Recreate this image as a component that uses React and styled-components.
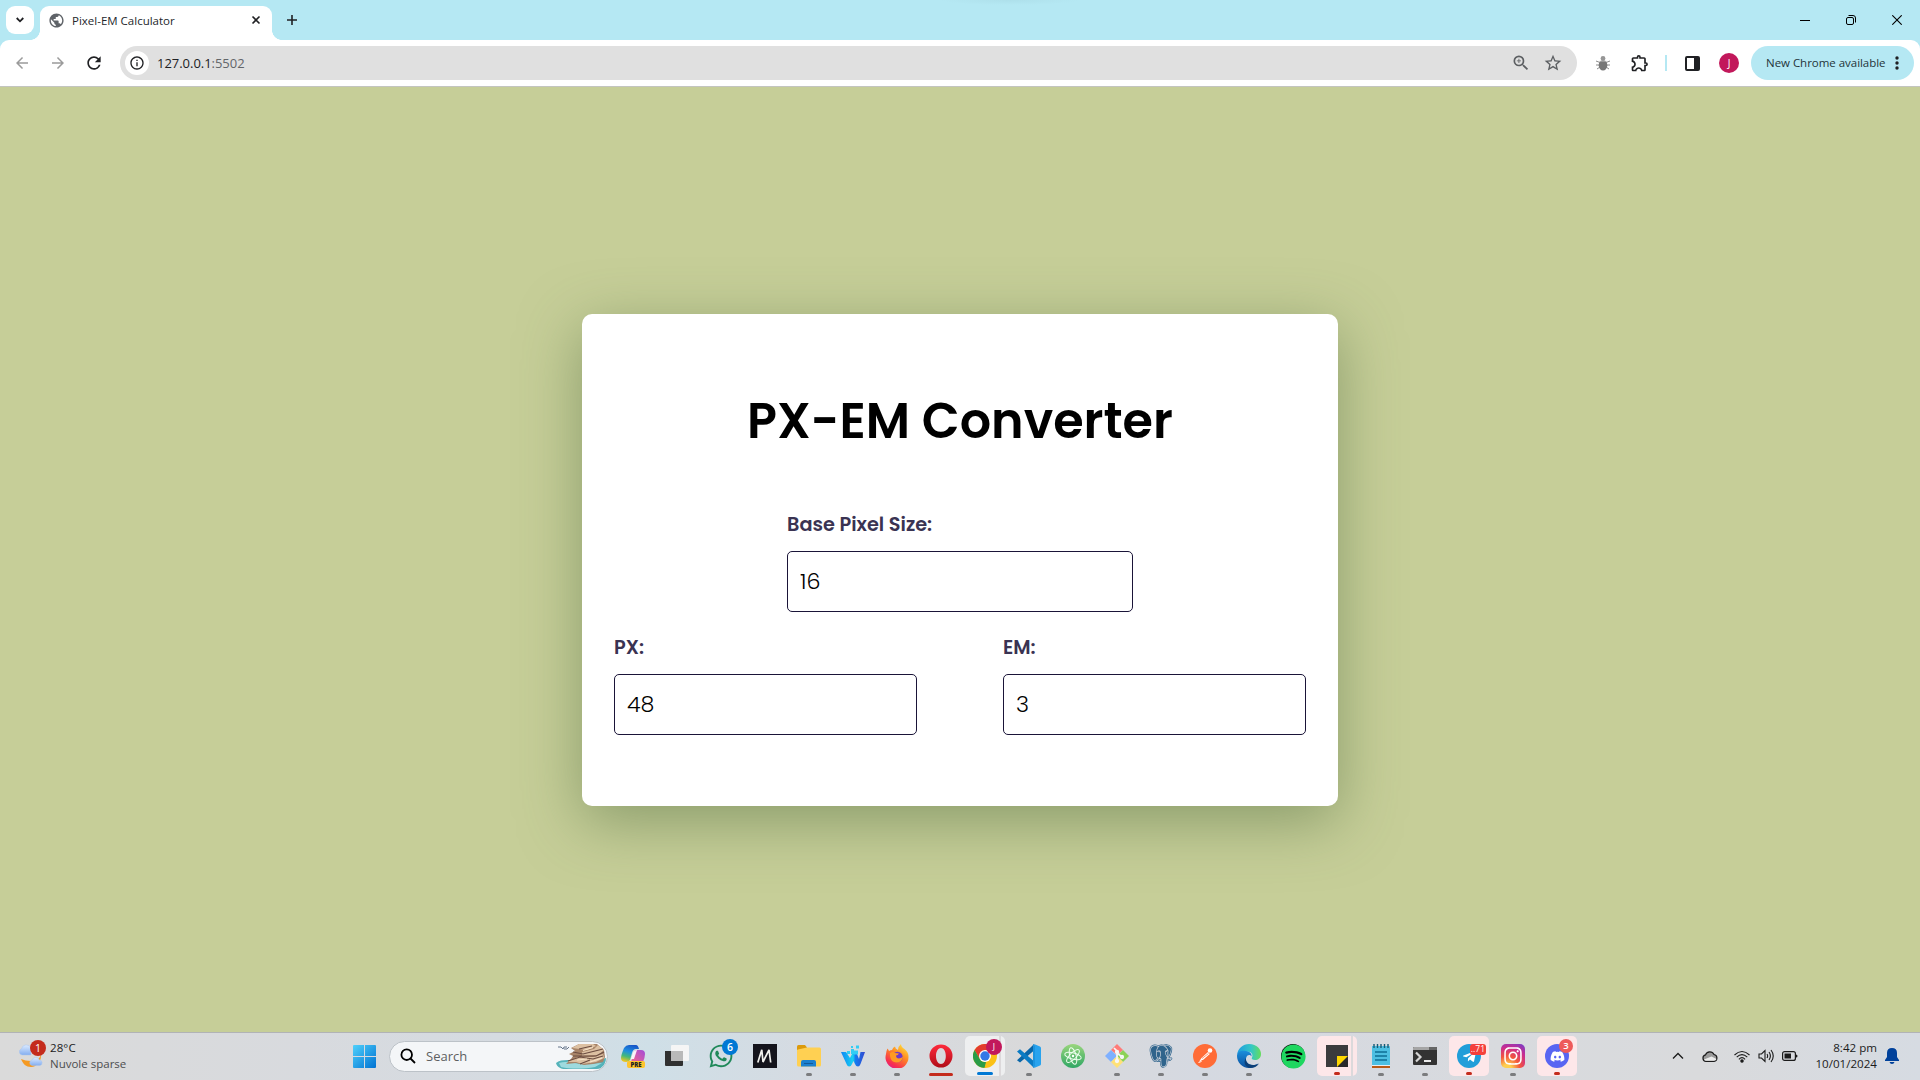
import React from "react";
import styled, { createGlobalStyle, css } from "styled-components";
import { FaWhatsapp, FaSpotify, FaTelegramPlane, FaDiscord, FaInstagram } from "react-icons/fa";
import { BiLogoPostgresql } from "react-icons/bi";
import {
  MdArrowBack, MdArrowForward, MdRefresh, MdInfoOutline, MdZoomIn, MdStarBorder, MdPublic, MdOutlineExtension,
} from "react-icons/md";

const UI = '"Open Sans", "Noto Sans", sans-serif';
const BRAND = 'Poppins, Inter, "Open Sans", sans-serif';

const Global = createGlobalStyle`
  * { box-sizing: border-box; }
  body { margin: 0; font-family: ${UI}; overflow: hidden; }
  svg { display: block; flex: none; }
`;

const Screen = styled.div`
  width: 1920px;
  height: 1080px;
  display: flex;
  flex-direction: column;
  background: #b5e8f3;
`;

/* ---------- browser chrome ---------- */

const TitleBar = styled.header`
  height: 40px;
  display: flex;
  align-items: flex-end;
  padding-left: 6px;
  background: radial-gradient(ellipse 70px 5px at 1010px 0, #aee0eb, #b5e8f3);
`;

const TabSearch = styled.button`
  width: 28px;
  height: 28px;
  margin: 0 6px 6px 0;
  padding: 0;
  border: 0;
  border-radius: 9px;
  background: #fff;
  color: #202124;
  display: grid;
  place-items: center;
`;

const Tab = styled.div`
  width: 232px;
  height: 34px;
  padding: 0 10px 6px 8px;
  display: flex;
  align-items: center;
  border-radius: 9px 9px 0 0;
  background: #fff;
  color: #202124;
  position: relative;
  &::before, &::after {
    content: "";
    position: absolute;
    bottom: 0;
    width: 10px;
    height: 10px;
  }
  &::before { left: -10px; background: radial-gradient(circle at 0 0, transparent 9.6px, #fff 10.2px); }
  &::after { right: -10px; background: radial-gradient(circle at 100% 0, transparent 9.6px, #fff 10.2px); }
`;

const TabTitle = styled.span`
  flex: 1;
  margin-left: 7px;
  padding-top: 1px;
  font-size: 11.5px;
  letter-spacing: 0;
  line-height: 16px;
  color: #24272b;
`;

const NewTab = styled.div`
  margin: 0 0 14px 14px;
  color: #202124;
`;

const WindowButtons = styled.div`
  margin-left: auto;
  height: 40px;
  display: flex;
`;

const WindowButton = styled.div`
  width: 46px;
  display: grid;
  place-items: center;
`;

const Toolbar = styled.nav`
  height: 46px;
  display: flex;
  align-items: center;
  padding: 0 6px 0 12px;
  border-radius: 9px 9px 0 0;
  background: #fff;
  color: #202124;
`;

const NavButton = styled.div`
  width: 20px;
  height: 20px;
  margin-right: 16px;
  display: grid;
  place-items: center;
  color: ${(p) => (p.$off ? "#9b9b9b" : "#202124")};
`;

const Address = styled.div`
  width: 1457px;
  height: 34px;
  padding: 0 14px 0 5px;
  display: flex;
  align-items: center;
  border-radius: 17px;
  background: #e0e0e0;
  color: #5c5f62;
`;

const SiteInfo = styled.div`
  width: 24px;
  height: 24px;
  border-radius: 50%;
  background: #fff;
  color: #202124;
  display: grid;
  place-items: center;
`;

const Url = styled.span`
  flex: 1;
  margin-left: 8px;
  font-size: 13px;
  letter-spacing: -0.03px;
  color: #202124;
  span { color: #63666a; }
`;

const Tools = styled.div`
  flex: 1;
  display: flex;
  align-items: center;
`;

const Divider = styled.i`
  width: 2px;
  height: 16px;
  margin: 0 18px 0 15px;
  background: #b5e8f3;
`;

const Avatar = styled.span`
  display: grid;
  place-items: center;
  width: ${(p) => p.$size}px;
  height: ${(p) => p.$size}px;
  border-radius: 50%;
  background: #c2185b;
  color: #fff;
  font-size: ${(p) => p.$size * 0.5}px;
  line-height: 1;
`;

const UpdatePill = styled.div`
  width: 163px;
  height: 34px;
  margin-left: auto;
  padding: 0 15px 0 15px;
  display: flex;
  align-items: center;
  justify-content: space-between;
  border-radius: 17px;
  background: #b5e8f3;
  color: #24343a;
  font-size: 11.5px;
  letter-spacing: -0.03px;
  white-space: nowrap;
  span { padding-bottom: 1px; }
`;

/* ---------- page ---------- */

const Page = styled.main`
  height: 946px;
  border-top: 1px solid #c3c5c0;
  display: flex;
  align-items: center;
  justify-content: center;
  background: #c6ce98;
  font-family: ${BRAND};
`;

const Card = styled.section`
  width: 756px;
  height: 492px;
  padding: 72.5px 32px 0;
  border-radius: 10px;
  background: #fff;
  box-shadow: 0 15px 60px rgba(78, 106, 62, 0.5);
`;

const Heading = styled.h1`
  margin: 0 0 55px;
  font-size: 49.28px;
  line-height: 70px;
  font-weight: 600;
  text-align: center;
  white-space: nowrap;
  color: #000;
`;

const Row = styled.div`
  display: flex;
  justify-content: ${(p) => (p.$center ? "center" : "space-between")};
  margin-bottom: 22px;
`;

const Field = styled.label`
  width: ${(p) => p.$width}px;
  display: flex;
  flex-direction: column;
  gap: 12px;
  font-size: 19.3px;
  line-height: 28px;
  font-weight: 600;
  color: #3a3352;
`;

const Input = styled.input`
  width: 100%;
  height: 61px;
  padding: 0 12px;
  border: 1px solid #1a1438;
  border-radius: 5px;
  outline: 0;
  background: #fff;
  color: #000;
  font: 300 22.2px ${BRAND};
`;

/* ---------- taskbar ---------- */

const Taskbar = styled.footer`
  height: 48px;
  padding-bottom: 1px;
  border-top: 1px solid #b1b3b6;
  display: flex;
  align-items: center;
  background: linear-gradient(90deg, #dadada 0, #d8dade 300px, #d5dbe1 500px, #cfdfe7 650px, #d5dbe2 800px, #d9d9da 1030px,
    #d5d9e1 1200px, #d8dade 1500px, #d9dadc 1700px, #d6dbe2 1920px);
`;

const Weather = styled.div`
  width: 342px;
  padding-left: 19px;
  display: flex;
  align-items: center;
  gap: 7px;
  font-size: 11.5px;
  line-height: 16px;
  color: #1b1b1b;
  p { margin: 0; letter-spacing: 0.1px; }
  p + p { color: #4c4d4f; letter-spacing: 0; }
`;

const Lines = styled.div`
  padding-bottom: 1px;
`;

const Holder = styled.span`
  position: relative;
  display: block;
`;

const Badge = styled.b`
  position: absolute;
  top: ${(p) => p.$top}px;
  right: ${(p) => p.$right}px;
  min-width: ${(p) => p.$size || 16}px;
  height: ${(p) => p.$height || p.$size || 16}px;
  padding: 0 1px;
  display: grid;
  place-items: center;
  border-radius: ${(p) => p.$radius ?? 8}px;
  background: ${(p) => p.$bg};
  color: ${(p) => p.$color || "#fff"};
  font-size: ${(p) => p.$font || 10.5}px;
  font-weight: ${(p) => p.$weight || 400};
  line-height: 1;
`;

const Search = styled.div`
  width: 219px;
  height: 31px;
  margin: 0 3px;
  padding: 0 1px 0 10px;
  display: flex;
  align-items: center;
  border: 1px solid #bcc2c8;
  border-radius: 16px;
  background: #f4f6f8;
  overflow: hidden;
  span {
    flex: 1;
    margin-left: 10px;
    padding-bottom: 1px;
    font-size: 13px;
    letter-spacing: 0;
    color: #5d5f61;
  }
`;

const Slot = styled.div`
  width: 44px;
  height: 47px;
  flex: none;
  display: flex;
  align-items: center;
  justify-content: center;
  position: relative;
  ${(p) => p.$tile && css`
    height: 40px;
    width: 40px;
    margin: 0 2px;
    border-radius: 5px;
    background: ${p.$stack
      ? `linear-gradient(90deg, ${p.$tile} 34px, #dcd9db 34px 36px, ${p.$tile} 36px)`
      : p.$tile};
  `}
  &::after {
    content: "";
    display: ${(p) => (p.$mark ? "block" : "none")};
    position: absolute;
    bottom: ${(p) => (p.$tile ? 1 : 4)}px;
    width: ${(p) => p.$markWidth || 6}px;
    height: 3px;
    border-radius: 2px;
    background: ${(p) => p.$mark};
  }
`;

const Disc = styled.span`
  width: 24px;
  height: 24px;
  display: grid;
  place-items: center;
  border-radius: ${(p) => p.$radius || "50%"};
  background: ${(p) => p.$bg};
  color: #fff;
`;

const Tray = styled.div`
  margin-left: auto;
  padding-right: 21px;
  display: flex;
  align-items: center;
  color: #1b1b1b;
`;

const Clock = styled.div`
  width: 72px;
  margin: 0 8px 0 7px;
  padding-bottom: 1px;
  text-align: right;
  font-size: 11.6px;
  line-height: 16px;
  white-space: nowrap;
  p { margin: 0; }
`;

const Gap = styled.i`
  width: ${(p) => p.$w}px;
`;

/* ---------- drawings ---------- */

const Line = ({ w = 24, h = w, box = `0 0 ${w} ${h}`, sw = 1.6, children }) => (
  <svg width={w} height={h} viewBox={box} fill="none" stroke="currentColor" strokeWidth={sw}>{children}</svg>
);

const WeatherIcon = () => (
  <svg width="24" height="24" viewBox="0 0 24 24">
    <defs>
      <linearGradient id="cl" x1="0" y1="0" x2="0" y2="1"><stop stopColor="#dcebff" /><stop offset="1" stopColor="#84aef0" /></linearGradient>
    </defs>
    <path d="M22 9c0 5-4 8-10 8-4 0-7-1-10-2 2 5 5 8 10 8 6 0 11-6 10-14z" fill="#f59a23" />
    <path d="M3 11a3.200 3.200 0 0 1-.5-6.200A5 5 0 0 1 12 4v7z" fill="url(#cl)" stroke="#a9c5ee" strokeWidth=".5" />
    <path d="M13 21.500a2.800 2.800 0 0 1 0-5.500 4 4 0 0 1 7.500 0 2.800 2.800 0 0 1 .5 5.500z" fill="url(#cl)" stroke="#a9c5ee" strokeWidth=".5" />
  </svg>
);

const StartIcon = () => (
  <svg width="23" height="23" viewBox="0 0 23 23">
    <defs><linearGradient id="win" x1="0" y1="0" x2="1" y2="1"><stop stopColor="#4fd0fb" /><stop offset="1" stopColor="#0072d2" /></linearGradient></defs>
    <path d="M1 0h10v11H0V1q0-1 1-1zM12 0h10q1 0 1 1v10H12zM0 12h11v11H1q-1 0-1-1zM12 12h11v10q0 1-1 1H12z" fill="url(#win)" />
  </svg>
);

const RocksIcon = () => (
  <svg width="50" height="27" viewBox="0 0 50 27">
    <path d="M0 20c5-4 14-3 26-2s18-2 24-3c0 6-4 11-9 11H9c-4 0-8-2-9-6z" fill="#55b3ba" />
    <path d="M3 20c9-3 17 2 29 1l14-1-7 4c-11 2-25 2-34 0z" fill="#9edade" />
    <path d="M15 5l8-4h18l7 6 1 7-2 5-10 2-9 1-8-2-10 1 5-5 2-3-4-2 6-3z" fill="#a88468" />
    <path d="M16 5l7-4h14l3 2-9 4zM26 9l12-3 4-4 6 5-6 5-16 1zM11 19l11-5 15 0 10-3 1 4-8 4-14 2-6-2z" fill="#dcc0a2" />
    <path d="M23 6l13-3M17 9l10 2 12-3 8-2M17 13l12 0 11 0 8-4M12 18l12-4 13 2 10-3M24 21l10-4" stroke="#6b4c41" strokeWidth="1.200" fill="none" />
    <path d="M27 7.500l10-3M21 17l10-1M34 19l12-4" stroke="#f7e3c9" strokeWidth="1.200" fill="none" />
    <path d="M2 4l3 0 2 2 1-2 3 0M8 6l2 0 1 0 2-2" stroke="#64748a" strokeWidth="1" fill="none" />
  </svg>
);

const CopilotIcon = () => (
  <svg width="24" height="24" viewBox="0 0 24 24">
    <defs>
      <linearGradient id="cpa" x1=".6" y1="0" x2=".3" y2="1"><stop stopColor="#1756c8" /><stop offset=".4" stopColor="#1f8fe0" /><stop offset=".7" stopColor="#44b97a" /><stop offset="1" stopColor="#f2c61d" /></linearGradient>
      <linearGradient id="cpb" x1="1" y1="0" x2="0" y2="1"><stop stopColor="#a24bd9" /><stop offset=".6" stopColor="#e2609d" /><stop offset="1" stopColor="#f59a55" /></linearGradient>
    </defs>
    <path d="M8 1h7q2 0 3 4h-3q-3 0-4 4l-2 7q-1 2-4 2-5 0-5-4 0-3 3-10Q5 1 8 1z" fill="url(#cpa)" />
    <path d="M15 6h5q4 0 4 4 0 3-2 8-1 4-5 4H9q-3 0-3-3 4 0 5-4l2-7q1-2 2-2z" fill="url(#cpb)" />
    <path d="M12 9q1-3 4-3l-3 9h-3z" fill="#fff" opacity=".9" />
  </svg>
);

const TaskViewIcon = () => (
  <svg width="24" height="24" viewBox="0 0 24 24">
    <path d="M0 7h18v14q0 1-1 1H1q-1 0-1-1z" fill="#303030" />
    <path d="M7 1h16q1 0 1 1v14q0 1-1 1H6V2q0-1 1-1z" fill="#f5f5f5" />
    <path d="M6 7h12v10H6z" fill="#b9b9b9" />
  </svg>
);

const MIcon = () => (
  <svg width="24" height="24" viewBox="0 0 24 24">
    <path d="M0 0h24v24H0z" fill="#14141c" />
    <path d="M4.800 18.500L8.800 5.800 10 18l6-12.200 1.700 12.700" fill="none" stroke="#f2f2ee" strokeWidth="1.700" strokeLinejoin="bevel" />
  </svg>
);

const FolderIcon = () => (
  <svg width="24" height="24" viewBox="0 0 24 24">
    <path d="M0 2.500Q0 1 1.500 1H8l2 2.500V8H0z" fill="#dc9a0b" />
    <path d="M1 5.500L10 3.500h12.500Q24 3.500 24 5v16q0 1.500-1.500 1.500h-21Q0 22.500 0 21V6z" fill="#ffd052" />
    <path d="M4 22.500V18q0-2 2-2h11q2 0 2 2v4.500z" fill="#1b80cf" /><path d="M7 19h9v1H7z" fill="#125a99" />
  </svg>
);

const WIcon = () => (
  <svg width="24" height="24" viewBox="0 0 24 24">
    <defs><linearGradient id="wg"><stop stopColor="#0f86f5" /><stop offset=".5" stopColor="#19d2f2" /><stop offset=".6" stopColor="#147bf0" /><stop offset="1" stopColor="#3348cf" /></linearGradient></defs>
    <path d="M0 8h5l4 6 2-4h5l2 5 1.500-7H24l-4.500 12q-1 2.500-2.500 2.500-2 0-3-2.500L12.500 17 11 20q-1 2.500-2.800 2.500-1.700 0-2.700-2.500z" fill="url(#wg)" />
    <path d="M6 7h3v3H6zM10 5h3v5h-3zM13 6.500h4v4h-4zM10 2h2v2h-2zM15 1.500h3v3h-3z" fill="#32cdf4" />
  </svg>
);

const FirefoxIcon = () => (
  <svg width="24" height="24" viewBox="0 0 24 24">
    <defs><linearGradient id="ff" x1=".8" y1="0" x2=".2" y2="1"><stop stopColor="#ffe33d" /><stop offset=".4" stopColor="#ff8a22" /><stop offset=".8" stopColor="#f7304f" /><stop offset="1" stopColor="#e01d8c" /></linearGradient></defs>
    <path d="M2.500 4.500q1 1 1.500 2.500 1.500-1 3-1Q8 3 10 2.500q0 2 3 3.500 0-3.500 3-6 0 3 3.500 5 4 3 4 8A11.500 11.500 0 1 1 1 10q.2-3 1.500-5.500z" fill="url(#ff)" />
    <circle cx="12.500" cy="13" r="5.200" fill="#7038c8" />
    <path d="M5 9q3-2 5 0l4 .5q-1 2-3 2 0 3 3 3 2 0 4-2-1 6-6.500 6Q6 18.500 5 12z" fill="#ff9a22" />
  </svg>
);

const OperaIcon = () => (
  <svg width="24" height="24" viewBox="0 0 24 24">
    <defs><linearGradient id="op" x1="0" y1="0" x2="0" y2="1"><stop stopColor="#ff2a3c" /><stop offset="1" stopColor="#b00d18" /></linearGradient></defs>
    <path fillRule="evenodd" d="M12 .5a11.500 11.500 0 1 0 0 23 11.500 11.500 0 0 0 0-23zm0 3.500c2.800 0 4.800 3.500 4.800 8s-2 8-4.800 8-5-3.500-5-8 2.200-8 5-8z" fill="url(#op)" />
  </svg>
);

const ChromeIcon = () => (
  <svg width="24" height="24" viewBox="0 0 24 24">
    <circle cx="12" cy="12" r="12" fill="#fbc116" />
    <path d="M1.600 6A12 12 0 0 1 22.400 6H12l-5.200 9z" fill="#e33b2e" />
    <path d="M1.600 6l5.200 9A6 6 0 0 0 12 18l.9.100L12 24A12 12 0 0 1 1.600 6z" fill="#2a9c47" />
    <path d="M17.200 15L12 24l-.7 0 3-8z" fill="#fbc116" />
    <circle cx="12" cy="12" r="6" fill="#fff" /><circle cx="12" cy="12" r="4.700" fill="#3478e6" />
  </svg>
);

const CodeIcon = () => (
  <svg width="24" height="24" viewBox="0 0 24 24">
    <path d="M17 0v6.500L3 18.500 0 16.300 13.500 3.500z" fill="#0a66a8" />
    <path d="M0 7.500L3 5.200l14 12V24l-4-4z" fill="#0a7bc4" />
    <path d="M17 0l6 2.500q1 .5 1 1.500v16q0 1-1 1.500L17 24q1-1 1-2V2q0-1-1-2z" fill="#29a3ee" />
    <path d="M17 0q1 1 1 2v20q0 1-1 2l-1-1V1z" fill="#1c94df" />
  </svg>
);

const AtomIcon = () => (
  <svg width="24" height="24" viewBox="0 0 24 24">
    <defs><linearGradient id="at" x1="0" y1="0" x2="0" y2="1"><stop stopColor="#9ad67d" /><stop offset="1" stopColor="#2fa764" /></linearGradient></defs>
    <circle cx="12" cy="12" r="12" fill="url(#at)" />
    <g fill="none" stroke="#effff0" strokeWidth="1">
      <ellipse cx="12" cy="12" rx="8.500" ry="3.200" transform="rotate(15 12 12)" />
      <ellipse cx="12" cy="12" rx="8.500" ry="3.200" transform="rotate(75 12 12)" />
      <ellipse cx="12" cy="12" rx="8.500" ry="3.200" transform="rotate(135 12 12)" />
    </g>
    <circle cx="12" cy="12" r="1.200" fill="#fff" />
  </svg>
);

const GitIcon = () => (
  <svg width="24" height="24" viewBox="0 0 24 24">
    <path d="M12 0l6 6-6 5-6-5z" fill="#ff7b78" /><path d="M6 6l6 6-6 6-6-6z" fill="#7fb0ff" />
    <path d="M18 6l6 6-6 6-6-6z" fill="#8cd257" /><path d="M12 12l6 6-6 6-6-6z" fill="#ffe177" />
    <g stroke="#f7f7f7" strokeWidth="1.700" fill="#f7f7f7"><path d="M9 4l3 3v10M12 9l5 4" fill="none" /><circle cx="12" cy="8" r="1.300" /><circle cx="17" cy="13" r="1.300" /><circle cx="12" cy="17" r="1.300" /></g>
  </svg>
);

const ElephantIcon = styled(BiLogoPostgresql)`
  color: #2f648c;
`;

const PostmanIcon = () => (
  <svg width="24" height="24" viewBox="0 0 24 24">
    <circle cx="12" cy="12" r="12" fill="#ff6c37" />
    <circle cx="17" cy="6.500" r="2.300" fill="#fff" />
    <path d="M15 8l1.800 2-6.300 5.500-4.500 2.300L8.500 14z" fill="#fff" /><path d="M9 14.500L15.500 9.500" stroke="#ff6c37" strokeWidth=".7" />
    <path d="M5.500 18.500l3-1" stroke="#fff" />
  </svg>
);

const EdgeIcon = () => (
  <svg width="24" height="24" viewBox="0 0 24 24">
    <defs>
      <linearGradient id="ea"><stop stopColor="#1c9be0" /><stop offset=".6" stopColor="#35c7c5" /><stop offset="1" stopColor="#65dd5a" /></linearGradient>
      <linearGradient id="eb" x1="0" y1="0" x2="0" y2="1"><stop stopColor="#1b8fdc" /><stop offset="1" stopColor="#0b4f9e" /></linearGradient>
    </defs>
    <path d="M0 11C1 4 6 0 12 0c8 0 12 5.500 12 10 0 4-3 6-6 6-2.500 0-4-1-3-2.500 1.500-3-.5-6-5-6C5 7.500 1 8 0 11z" fill="url(#ea)" />
    <path d="M0 12c0-5 5-6 9-5 4 .5 6 3 5.500 5.500-1-2.500-5-2-5.500 2-.5 5 6 9 12 5-2 3-5.500 4.500-9 4.500C5 24 0 18 0 12z" fill="url(#eb)" />
    <path d="M9 14c-1 6 6 9 13 5.500-2 3-5 4.500-9 4.500-5-1-7-6-4-10z" fill="#0c3f78" />
  </svg>
);

const StickyIcon = () => (
  <svg width="22" height="22" viewBox="0 0 22 22"><path d="M0 0h22v11L11 22H0z" fill="#3b3b3d" /><path d="M11 11h11v11H11z" fill="#29292b" /><path d="M11 11h11L11 22z" fill="#ffd600" /></svg>
);

const NotepadIcon = () => (
  <svg width="20" height="24" viewBox="0 0 20 24">
    <path d="M1 2h17q1 0 1 1v18H1z" fill="#4dbfe2" /><path d="M1 21h18v1H1z" fill="#e9edf0" /><path d="M1 22h18v2H1z" fill="#b85a17" />
    <path d="M3 0v4M6.500 0v4M10 0v4M13.500 0v4M17 0v4" stroke="#175a75" strokeWidth="1.400" />
    <path d="M4 8h12M4 12h12M4 16h12" stroke="#0e6f95" strokeWidth="1.500" />
  </svg>
);

const TerminalIcon = () => (
  <svg width="24" height="18" viewBox="0 0 24 18">
    <path d="M1 0h22q1 0 1 1v16q0 1-1 1H1q-1 0-1-1V1q0-1 1-1z" fill="#333" /><path d="M1 0h15v3H0V1q0-1 1-1z" fill="#a5a5a5" /><path d="M16 0h7q1 0 1 1v2h-8z" fill="#666" />
    <path d="M3 5.500L7.500 10 3 14.500" fill="none" stroke="#d6d6d6" strokeWidth="2.200" /><path d="M11 14h7" stroke="#fff" strokeWidth="1.800" />
  </svg>
);

const CloudIcon = () => (
  <Line w={16} h={11} sw={1.2}>
    <path d="M4 10.400a3.300 3.300 0 0 1-.5-6.500A4.600 4.600 0 0 1 12 3.500a3.500 3.500 0 0 1 0 6.900z" fill="#9a9a9a" />
    <path d="M2 8.500L9.500 5.500 14.500 8q-.5 1.700-2.500 1.800H4q-1.500-.1-2-1.300z" fill="#ececec" stroke="none" />
  </Line>
);

const WifiIcon = () => (
  <Line w={16} h={13} sw={1.1}>
    <path d="M.5 5Q8-2 15.500 5M2.700 7.200Q8 2 13.300 7.200M4.900 9.300Q8 6 11.100 9.300" /><circle cx="8" cy="11" r="1.200" fill="currentColor" />
  </Line>
);

const VolumeIcon = () => (
  <Line w={17} h={14} sw={1.1}>
    <path d="M1 5h2.500L7 1.500v11L3.500 9H1zM9 5q1.300 2 0 4M11 3q2.800 4 0 8M13 1q4.500 6 0 12" />
  </Line>
);

const BatteryIcon = () => (
  <Line w={16} h={10} sw={1.2}>
    <rect x=".6" y=".6" width="12.800" height="8.800" rx="2" /><path d="M2.500 2.500h6.500v5H2.500zM14 3.500q1.500 0 1.500 1.500T14 6.500z" fill="currentColor" stroke="none" />
  </Line>
);

const BugIcon = () => (
  <svg width="14" height="15" viewBox="0 0 14 15">
    <path d="M0 5l4 1.500M0 9h4M1 13l3-2M14 5l-4 1.500M14 9h-4M13 13l-3-2" stroke="#8d8d8d" strokeWidth="1" />
    <circle cx="7" cy="2.500" r="2.400" fill="#969696" /><ellipse cx="7" cy="9.300" rx="4.300" ry="5.200" fill="#777" /><path d="M3.500 5h7" stroke="#ddd" strokeWidth=".7" />
  </svg>
);

const gray = "#7b7c7e";
const red = "#c42b1c";

const apps = [
  { name: "tasks", icon: <TaskViewIcon /> },
  { name: "whatsapp", icon: <Holder><FaWhatsapp size={26} color="#20895a" /><Badge $top={-4} $right={-4} $bg="#0078d4" $weight={600}>6</Badge></Holder> },
  { name: "m", icon: <MIcon /> },
  { name: "files", icon: <FolderIcon />, mark: gray },
  { name: "w", icon: <WIcon />, mark: gray },
  { name: "firefox", icon: <FirefoxIcon />, mark: gray },
  { name: "opera", icon: <OperaIcon />, mark: red, markWidth: 24 },
  { name: "chrome", icon: <Holder><ChromeIcon /><Badge $top={-5} $right={-5} $bg="#c2185b" $font={8.5}>J</Badge></Holder>, mark: "#0078d4", markWidth: 16, tile: "#eeeff0", stack: true },
  { name: "code", icon: <CodeIcon />, mark: gray },
  { name: "atom", icon: <AtomIcon /> },
  { name: "git", icon: <GitIcon />, mark: gray },
  { name: "postgres", icon: <ElephantIcon size={28} />, mark: gray },
  { name: "postman", icon: <PostmanIcon />, mark: gray },
  { name: "edge", icon: <EdgeIcon />, mark: gray },
  { name: "spotify", icon: <Disc $bg="#000"><FaSpotify size={25} color="#1ed760" /></Disc> },
  { name: "notes", icon: <StickyIcon />, mark: red, tile: "#fde7e9", stack: true },
  { name: "notepad", icon: <NotepadIcon />, mark: gray },
  { name: "terminal", icon: <TerminalIcon />, mark: gray },
  { name: "telegram", icon: <Holder><Disc $bg="#229ed9"><FaTelegramPlane size={15} /></Disc><Badge $top={0} $right={-5} $bg="#f5403b" $height={11} $radius={3} $font={8.5}>..71</Badge></Holder>, mark: red, tile: "#fde7e9" },
  { name: "instagram", icon: <Disc $radius="5px" $bg="radial-gradient(circle at 25% 105%, #fecf50 0 15%, #f3563c 42%, #cc2c8e 70%, #6b3fd0 100%)"><FaInstagram size={20} /></Disc>, mark: gray },
  { name: "discord", icon: <Holder><Disc $bg="#5865f2"><FaDiscord size={15} /></Disc><Badge $top={-5} $right={-4} $bg="#ee5a5a" $size={14} $font={9.5} $weight={600}>3</Badge></Holder>, mark: red, tile: "#fde7e9" },
];

function Browser() {
  return (
    <>
      <TitleBar>
        <TabSearch><Line w={8} h={6} sw={1.8}><path d="M.7 1L4 4.300 7.300 1" /></Line></TabSearch>
        <Tab>
          <MdPublic size={17} color="#5f6368" />
          <TabTitle>Pixel-EM Calculator</TabTitle>
          <Line w={12} sw={1.6}><path d="M2.500 2.500l7 7M9.500 2.500l-7 7" /></Line>
        </Tab>
        <NewTab><Line w={12} sw={1.6}><path d="M6 1v10M1 6h10" /></Line></NewTab>
        <WindowButtons>
          <WindowButton><Line w={10} h={40} sw={1}><path d="M0 20.500h10" /></Line></WindowButton>
          <WindowButton><Line w={10} sw={1}><rect x=".5" y="2.500" width="7" height="7" rx="1.500" /><path d="M2.500.5H7q2.500 0 2.500 2.500v4.500" /></Line></WindowButton>
          <WindowButton><Line w={10} sw={1.1}><path d="M.3.3l9.400 9.400M9.700.3L.3 9.700" /></Line></WindowButton>
        </WindowButtons>
      </TitleBar>
      <Toolbar>
        <NavButton $off><MdArrowBack size={18} /></NavButton>
        <NavButton $off><MdArrowForward size={18} /></NavButton>
        <NavButton><MdRefresh size={20} /></NavButton>
        <Address>
          <SiteInfo><MdInfoOutline size={16} /></SiteInfo>
          <Url>127.0.0.1<span>:5502</span></Url>
          <MdZoomIn size={20} /><Gap $w={12} /><MdStarBorder size={20} />
        </Address>
        <Tools>
          <Gap $w={19} /><BugIcon /><Gap $w={20} /><MdOutlineExtension size={20} /><Divider />
          <Line w={15} sw={2}><rect x="1" y="1" width="13" height="13" rx="1" /><path d="M9 1h5v13H9z" fill="currentColor" stroke="none" /></Line>
          <Gap $w={19} /><Avatar $size={20}>J</Avatar>
          <UpdatePill><span>New Chrome available</span>
            <svg width="4" height="14" viewBox="0 0 4 14" fill="#202124"><circle cx="2" cy="2" r="1.700" /><circle cx="2" cy="7" r="1.700" /><circle cx="2" cy="12" r="1.700" /></svg>
          </UpdatePill>
        </Tools>
      </Toolbar>
    </>
  );
}

function Converter() {
  return (
    <Page>
      <Card>
        <Heading>PX-EM Converter</Heading>
        <Row $center>
          <Field $width={346}>Base Pixel Size:<Input defaultValue="16" /></Field>
        </Row>
        <Row>
          <Field $width={303}>PX:<Input defaultValue="48" /></Field>
          <Field $width={303}>EM:<Input defaultValue="3" /></Field>
        </Row>
      </Card>
    </Page>
  );
}

export default function App() {
  return (
    <Screen>
      <Global />
      <Browser />
      <Converter />
      <Taskbar>
        <Weather>
          <Holder><WeatherIcon /><Badge $top={-4} $right={-3} $bg={red}>1</Badge></Holder>
          <Lines><p>28°C</p><p>Nuvole sparse</p></Lines>
        </Weather>
        <Slot><StartIcon /></Slot>
        <Search>
          <Line w={16} sw={1.8}><circle cx="6.700" cy="6.700" r="5.300" /><path d="M10.500 10.500L15 15" /></Line>
          <span>Search</span>
          <RocksIcon />
        </Search>
        <Slot><Holder><CopilotIcon /><Badge $top={17} $right={0} $bg="#ffc52e" $color="#222" $size={18} $height={7} $radius={2} $font={6} $weight={800}>PRE</Badge></Holder></Slot>
        {apps.map((a) => (
          <Slot key={a.name} $tile={a.tile} $stack={a.stack} $mark={a.mark} $markWidth={a.markWidth}>{a.icon}</Slot>
        ))}
        <Tray>
          <Line w={12} h={8} sw={1.3}><path d="M1 6.500l5-5 5 5" /></Line><Gap $w={18} />
          <CloudIcon /><Gap $w={16} /><WifiIcon /><Gap $w={8} /><VolumeIcon /><Gap $w={7} /><BatteryIcon />
          <Clock><p>8:42 pm</p><p>10/01/2024</p></Clock>
          <svg width="14" height="16" viewBox="0 0 14 16" fill="#00419b"><path d="M7 0q5 0 5 5v4l2 3v1H0v-1l2-3V5q0-5 5-5zM4.500 14h5Q9 16 7 16t-2.500-2z" /></svg>
        </Tray>
      </Taskbar>
    </Screen>
  );
}
